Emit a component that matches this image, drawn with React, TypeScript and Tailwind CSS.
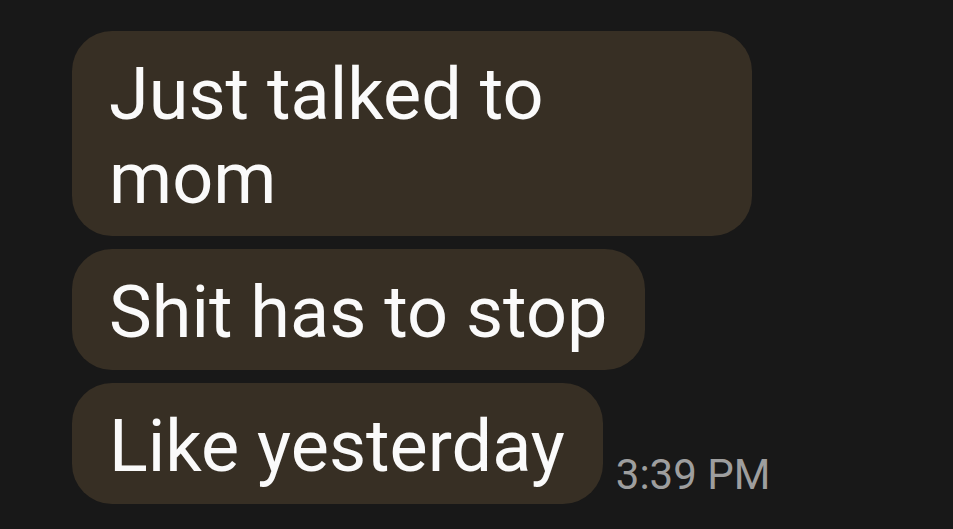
export default function App() {
  const messages = ["Just talked to mom", "Shit has to stop", "Like yesterday"];

  return (
    <div
      className="h-[529px] w-[953px] overflow-hidden bg-[#181818] pl-[72px] pt-[31px]"
      style={{ fontFamily: "Roboto, 'Noto Sans', sans-serif" }}
    >
      <div className="flex flex-col items-start gap-[13px]">
        {messages.map((text, index) => (
          <div key={text} className="flex items-end">
            <div className="max-w-[680px] rounded-[40px] bg-[#372f24] pb-[15px] pl-[37px] pr-[38px] pt-[22px] text-[72px] leading-[84px] text-[#fafafa]">
              {text}
            </div>

            {index === messages.length - 1 && (
              <span className="mb-[5px] ml-[13px] text-[42px] leading-[48px] text-[#9e9e9e]">
                3:39 PM
              </span>
            )}
          </div>
        ))}
      </div>
    </div>
  );
}
